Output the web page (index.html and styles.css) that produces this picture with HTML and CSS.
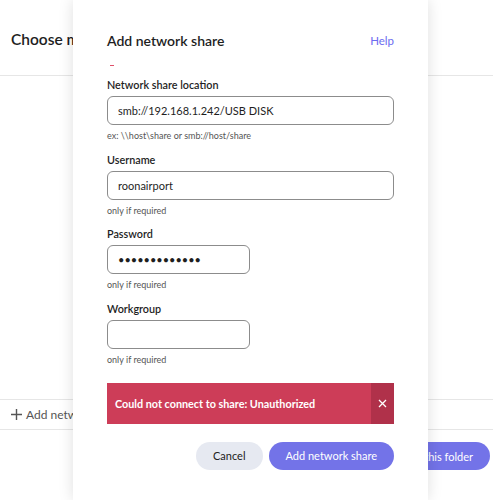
FILE: index.html
```html
<!DOCTYPE html>
<html lang="en">
<head>
  <meta charset="UTF-8">
  <meta name="viewport" content="width=device-width, initial-scale=1.0">
  <title>Add network share</title>
  <link rel="stylesheet" href="styles.css">
</head>
<body>

  <!-- Page behind the dialog -->
  <div class="page">
    <div class="page-header"><span class="page-title">Choose music folder</span></div>
    <div class="page-body"></div>
    <div class="add-row">
      <svg class="plus" width="11" height="11" viewBox="0 0 11 11"><path d="M5.5 0v11M0 5.5h11" stroke="#555" stroke-width="1.4"/></svg>
      <span class="add-text">Add network share</span>
    </div>
    <div class="page-footer">
      <button class="btn btn-primary">Select this folder</button>
    </div>
  </div>

  <!-- Dialog -->
  <div class="modal">
    <div class="modal-header">
      <h1>Add network share</h1>
      <a class="help" href="#">Help</a>
    </div>
    <div class="dash"></div>

    <div class="field">
      <label>Network share location</label>
      <input class="input" type="text" value="smb://192.168.1.242/USB DISK">
      <p class="hint">ex: \\host\share or smb://host/share</p>
    </div>

    <div class="field">
      <label>Username</label>
      <input class="input" type="text" value="roonairport">
      <p class="hint">only if required</p>
    </div>

    <div class="field">
      <label>Password</label>
      <input class="input input-short password" type="password" value="roonairport01">
      <p class="hint">only if required</p>
    </div>

    <div class="field">
      <label>Workgroup</label>
      <input class="input input-short" type="text" value="">
      <p class="hint">only if required</p>
    </div>

    <div class="error">
      <span class="error-text">Could not connect to share: Unauthorized</span>
      <span class="error-close">
        <svg width="9" height="9" viewBox="0 0 9 9"><path d="M1 1l7 7M8 1l-7 7" stroke="#fff" stroke-width="1.3"/></svg>
      </span>
    </div>

    <div class="actions">
      <button class="btn btn-secondary">Cancel</button>
      <button class="btn btn-primary">Add network share</button>
    </div>
  </div>

</body>
</html>
```

FILE: styles.css
```css
body {
  font-family: Lato, "Open Sans", sans-serif;
  margin: 0;
  background: #fff;
  color: #1e1e1e;
  width: 493px;
  height: 500px;
  overflow: hidden;
  position: relative;
}

/* Page behind */
.page {
  display: flex;
  flex-direction: column;
  height: 500px;
}
.page-header {
  height: 76px;
  border-bottom: 1px solid #e6e6e6;
  padding: 3px 0 0 11px;
  display: flex;
  align-items: center;
  box-sizing: border-box;
  flex-shrink: 0;
}
.page-title {
  font-size: 15.5px;
  font-weight: 600;
  white-space: nowrap;
}
.page-body {
  height: 323px;
}
.add-row {
  height: 29px;
  border-top: 1px solid #e6e6e6;
  border-bottom: 1px solid #e6e6e6;
  display: flex;
  align-items: center;
  gap: 4px;
  padding-left: 11px;
}
.add-text {
  font-size: 12px;
  color: #555;
  white-space: nowrap;
}
.page-footer {
  display: flex;
  justify-content: flex-end;
  padding: 12px 3px 0 0;
}

/* Buttons */
.btn {
  font-family: inherit;
  font-size: 11px;
  height: 28px;
  border: none;
  border-radius: 14px;
  padding: 0 17px;
  cursor: pointer;
}
.btn-primary {
  background: #7373e8;
  color: #fff;
}
.btn-secondary {
  background: #e6e9f1;
  color: #222;
}

/* Dialog */
.modal {
  position: absolute;
  left: 73px;
  top: 0;
  width: 355px;
  height: 500px;
  background: #fff;
  box-shadow: 0 0 14px rgba(0, 0, 0, 0.13);
  padding: 28px 34px 0 34px;
  box-sizing: border-box;
}
.modal-header {
  display: flex;
  justify-content: space-between;
  align-items: center;
  height: 24px;
}
.modal-header h1 {
  margin: 0;
  font-size: 14px;
  font-weight: 600;
  color: #1e1e1e;
}
.help {
  font-size: 11.5px;
  color: #6c6cf0;
  text-decoration: none;
}
.dash {
  width: 4px;
  height: 1px;
  background: #e0506a;
  margin: 13px 0 11px 3px;
}

.field {
  display: flex;
  flex-direction: column;
  align-items: flex-start;
  margin-bottom: 8.5px;
}
.field label {
  font-size: 10.8px;
  font-weight: 600;
  line-height: 16px;
  margin-bottom: 3px;
}
.input {
  width: 287px;
  height: 29px;
  box-sizing: border-box;
  border: 1px solid #8c8c8c;
  border-radius: 6px;
  padding: 0 10px;
  font-family: inherit;
  font-size: 11px;
  color: #1e1e1e;
  outline: none;
}
.input-short {
  width: 143px;
}
.password {
  font-size: 11px;
}
.hint {
  margin: 4px 0 0;
  font-size: 9px;
  line-height: 14px;
  color: #555;
}

.error {
  margin-top: 16px;
  height: 41px;
  flex-shrink: 0;
  display: flex;
  background: #cd3d58;
  color: #fff;
}
.error-text {
  flex: 1;
  display: flex;
  align-items: center;
  padding-left: 8px;
  font-size: 10.8px;
  font-weight: 700;
}
.error-close {
  width: 23px;
  background: #b0314a;
  display: flex;
  align-items: center;
  justify-content: center;
}

.actions {
  display: flex;
  justify-content: flex-end;
  gap: 6px;
  margin-top: 18px;
}
```
